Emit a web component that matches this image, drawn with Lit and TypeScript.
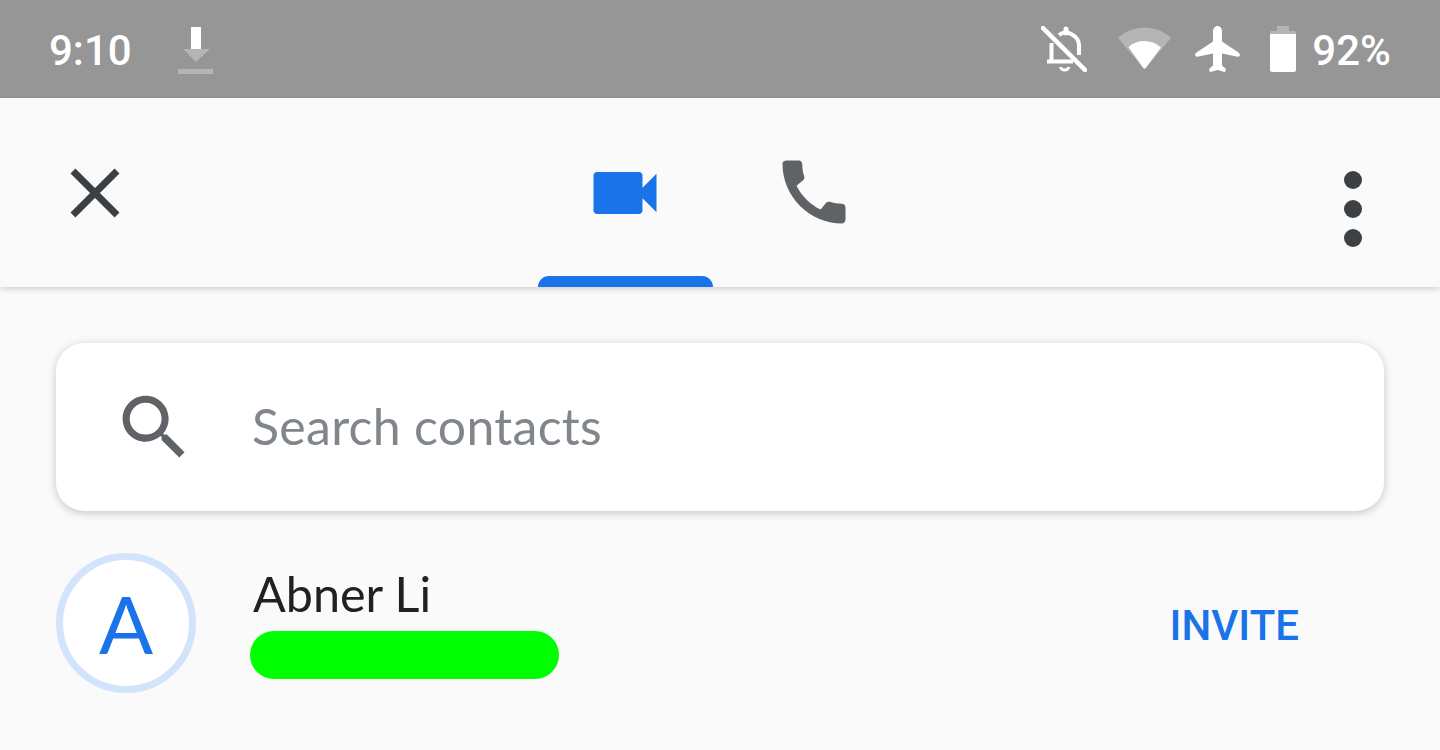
import { LitElement, html, css } from "lit";
import { customElement } from "lit/decorators.js";

@customElement("app-root")
export class AppRoot extends LitElement {
  static styles = css`
    :host { display: block; width: 1440px; height: 750px; overflow: hidden; background: #fafafa; font-family: Roboto, "Noto Sans", sans-serif; }
    svg { display: block; flex: none; }
    .status { height: 98px; box-sizing: border-box; background: #969696; color: #fff; display: flex; align-items: center; padding: 0 49px; font-weight: 500; font-size: 42px; }
    .time { width: 129px; padding-top: 2px; }
    .dl { margin-top: 2px; }
    .status-right { margin-left: auto; display: flex; align-items: center; }
    .s-bell { margin-right: 31px; }
    .s-wifi { margin-right: 24px; margin-top: -2px; }
    .s-plane { margin-right: 30px; }
    .s-batt { margin-right: 16px; }
    .pct { padding-top: 2px; }
    .bar { height: 189px; background: #fafafa; display: grid; grid-template-columns: 1fr auto 1fr; align-items: stretch; box-shadow: 0 2px 6px rgba(0,0,0,.17); position: relative; }
    .bar-left { display: flex; align-items: center; padding-left: 53px; }
    .bar-right { display: flex; align-items: center; justify-content: flex-end; padding: 32px 78px 0 0; }
    .tabs { display: flex; }
    .tab { width: 189px; display: flex; align-items: center; justify-content: center; position: relative; }
    .video { margin-right: 2px; }
    .phone { margin: 0 2px 2px 0; }
    .indicator { position: absolute; left: 7px; right: 7px; bottom: 0; height: 11px; background: #1a73e8; border-radius: 11px 11px 0 0; }
    .dots { display: flex; flex-direction: column; gap: 11px; }
    .dots span { display: block; width: 18px; height: 18px; border-radius: 50%; background: #3c4043; }
    .search { margin: 56px 56px 0; height: 168px; background: #fff; border-radius: 28px; box-shadow: 0 2px 9px rgba(60,64,67,.28); display: flex; align-items: center; padding-left: 56px; }
    .ph { margin-left: 55px; font-family: Lato, sans-serif; font-size: 50px; color: #80868b; letter-spacing: 0.3px; margin-bottom: 2px; }
    .contact { margin: 42px 56px 0; display: flex; align-items: center; height: 140px; }
    .avatar { width: 140px; height: 140px; box-sizing: border-box; border: 7px solid #d2e3fc; border-radius: 50%; background: #fff; color: #1a73e8; font-family: Lato, sans-serif; font-size: 80px; display: flex; align-items: center; justify-content: center; flex: none; }
    .info { margin-left: 53px; display: flex; flex-direction: column; }
    .name { margin-left: 4px; font-family: Lato, sans-serif; font-size: 48.500px; line-height: 56px; color: #202124; margin-top: -2px; }
    .redact { margin-left: 1px; width: 309px; height: 48px; border-radius: 24px; background: #00ff00; margin-top: 10px; }
    .invite { margin-left: auto; margin-right: 85px; color: #1a73e8; font-size: 42px; font-weight: 500; padding-top: 4px; }
  `;

  render() {
    return html`
      <div class="status">
        <span class="time">9:10</span>
        <svg class="dl" width="35" height="47" viewBox="0 0 35 47">
          <rect x="13" y="0" width="10" height="22" fill="#fff"/>
          <path d="M5 22H32L18 35Z" fill="#fff" fill-opacity=".3"/>
          <rect x="0" y="42" width="35" height="5" fill="#fff" fill-opacity=".3"/>
        </svg>
        <div class="status-right">
          <svg class="s-bell" width="46" height="46" viewBox="0 0 46 46" fill="none" stroke="#fff" stroke-width="4">
            <path d="M2 2L44 44" stroke-linecap="square" stroke-width="4.500"/>
            <path d="M6 35.500H32M10.500 35.500V17" />
            <path d="M18 9C22 6 27 6 31 8.500C35.500 11 38 14 38 19V29" />
            <path d="M25 7V3" stroke-width="5" stroke-linecap="round"/>
            <path d="M19.500 41c1 4 7 4 8.500 0" stroke-width="3"/>
          </svg>
          <svg class="s-wifi" width="53" height="42" viewBox="0 0 53 42">
            <path d="M0.500 10.500C15 -3 38 -3 52.500 10.500Q53 11 52.500 11.500L27.500 41.200Q26.500 42 25.500 41.200L.5 11.500Q0 11 .5 10.500Z" fill="#fff" fill-opacity=".3"/>
            <path d="M10.500 20C20 12 33 12 43 20.500L27.500 41.200Q26.500 42 25.500 41.200Z" fill="#fff"/>
          </svg>
          <svg class="s-plane" width="45" height="47" viewBox="-0.500 0 45 47">
            <path fill="#fff" d="M22 0C24.500 0 26.500 2.500 26.500 5V15.500L43 26.500Q45 28 44 30Q43 31 41 30.500L26.500 27.500V39.500L30 42.500Q31 45 29 46L22 44L15 46Q13 45 14 42.500L17.500 39.500V27.500L3 30.500Q1 31 0 30Q-1 28 1 26.500L17.500 15.500V5C17.500 2.500 19.500 0 22 0Z"/>
          </svg>
          <svg class="s-batt" width="26" height="46" viewBox="0 0 26 46">
            <path d="M7 0H19V5H24.500Q26 5 26 7V8H0V7Q0 5 1.500 5H7Z" fill="#fff" fill-opacity=".3"/>
            <path d="M0 8H26V44Q26 46 24 46H2Q0 46 0 44Z" fill="#fff"/>
          </svg>
          <span class="pct">92%</span>
        </div>
      </div>
      <div class="bar">
        <div class="bar-left">
          <svg width="84" height="84" viewBox="0 0 24 24"><path fill="#3c4043" d="M19 6.410L17.590 5 12 10.590 6.410 5 5 6.410 10.590 12 5 17.590 6.410 19 12 13.410 17.590 19 19 17.590 13.410 12z"/></svg>
        </div>
        <div class="tabs">
          <div class="tab">
            <svg class="video" width="84" height="84" viewBox="0 0 24 24"><path fill="#1a73e8" d="M17 10.500V7c0-.55-.45-1-1-1H4c-.55 0-1 .45-1 1v10c0 .55.45 1 1 1h12c.55 0 1-.45 1-1v-3.500l4 4v-11l-4 4z"/></svg>
            <span class="indicator"></span>
          </div>
          <div class="tab">
            <svg class="phone" width="84" height="84" viewBox="0 0 24 24"><path fill="#5f6368" d="M20.010 15.380c-1.230 0-2.420-.2-3.530-.56-.35-.12-.74-.03-1.010.24l-1.570 1.970c-2.830-1.350-5.480-3.900-6.890-6.830l1.950-1.660c.27-.28.35-.67.24-1.020-.37-1.110-.56-2.300-.56-3.530 0-.54-.45-.99-.99-.99H4.190C3.650 3 3 3.240 3 3.990 3 13.280 10.730 21 20.010 21c.71 0 .99-.63.99-1.180v-3.450c0-.54-.45-.99-.99-.99z"/></svg>
          </div>
        </div>
        <div class="bar-right">
          <div class="dots"><span></span><span></span><span></span></div>
        </div>
      </div>
      <div class="search">
        <svg width="85" height="85" viewBox="0 0 24 24"><path fill="#5f6368" d="M15.500 14h-.79l-.28-.27C15.410 12.590 16 11.110 16 9.500 16 5.910 13.090 3 9.500 3S3 5.910 3 9.500 5.910 16 9.500 16c1.610 0 3.090-.59 4.230-1.570l.27.28v.79l5 4.990L20.490 19l-4.990-5zm-6 0C7.010 14 5 11.990 5 9.500S7.010 5 9.500 5 14 7.010 14 9.500 11.990 14 9.500 14z"/></svg>
        <span class="ph">Search contacts</span>
      </div>
      <div class="contact">
        <div class="avatar">A</div>
        <div class="info">
          <div class="name">Abner Li</div>
          <div class="redact"></div>
        </div>
        <span class="invite">INVITE</span>
      </div>
    `;
  }
}
